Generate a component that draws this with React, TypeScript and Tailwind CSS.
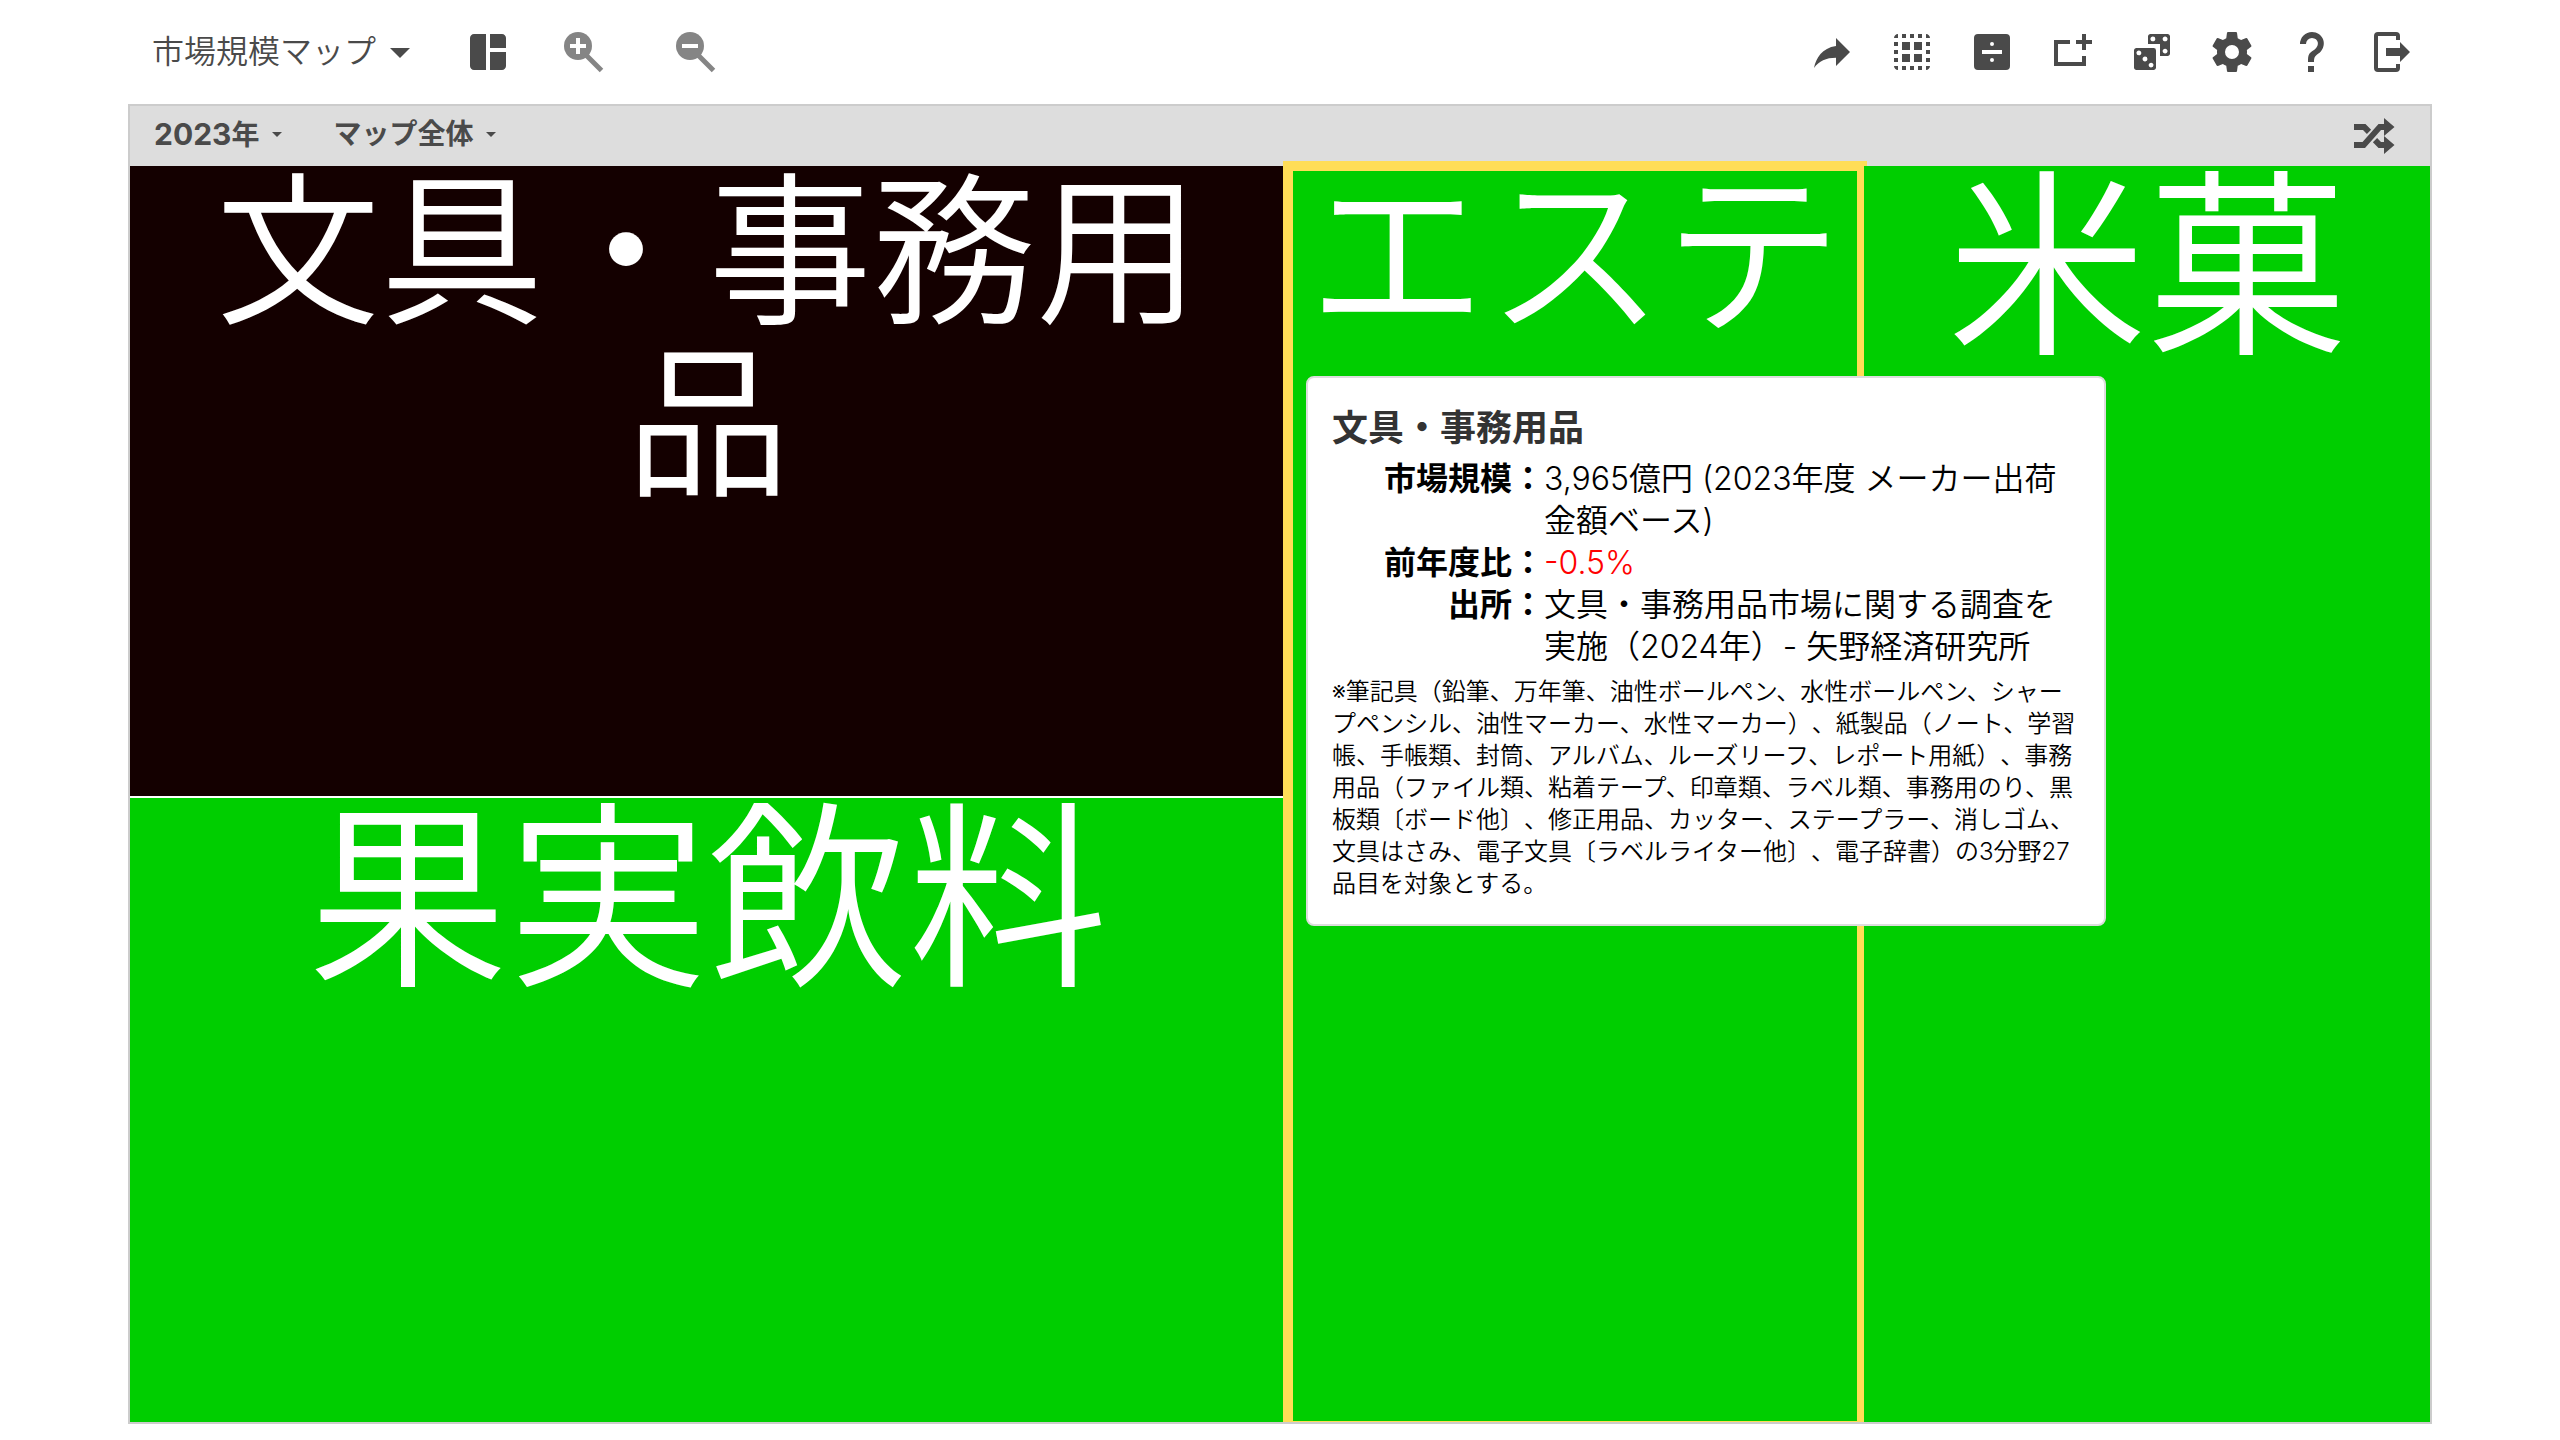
import type { ReactNode } from 'react'
import { MdSpaceDashboard } from 'react-icons/md'

const actions = [
  {
    label: '共有',
    path: 'M21,12L14,5V9C7,10 4,15 3,20C5.5,16.5 9,14.9 14,14.9V19L21,12Z',
  },
  {
    label: '選択',
    path: 'M3 5h2V3c-1.1 0-2 .9-2 2zm0 8h2v-2H3v2zm4 8h2v-2H7v2zM3 9h2V7H3v2zm10-6h-2v2h2V3zm6 0v2h2c0-1.1-.9-2-2-2zM5 21v-2H3c0 1.1.9 2 2 2zm-2-4h2v-2H3v2zM9 3H7v2h2V3zm2 18h2v-2h-2v2zm8-8h2v-2h-2v2zm0 8c1.1 0 2-.9 2-2h-2v2zm0-12h2V7h-2v2zm0 8h2v-2h-2v2zm-4 4h2v-2h-2v2zm0-16h2V3h-2v2zM7 7h4v4H7zM13 7h4v4h-4zM7 13h4v4H7zM13 13h4v4h-4z',
  },
  {
    label: '割り算',
    path: 'M5 3h14a2 2 0 0 1 2 2v14a2 2 0 0 1-2 2H5a2 2 0 0 1-2-2V5a2 2 0 0 1 2-2zM7 11v2h10v-2zM12 7a1 1 0 0 0 0 2a1 1 0 0 0 0-2zM12 15a1 1 0 0 0 0 2a1 1 0 0 0 0-2z',
  },
  {
    label: '追加',
    path: 'M19,6H22V8H19V11H17V8H14V6H17V3H19V6M17,17V14H19V19H3V6H11V8H5V17H17Z',
  },
  {
    label: 'ランダム',
    path: 'M19.78,3H11.22C10.55,3 10,3.55 10,4.22V8H16V14H19.78C20.45,14 21,13.45 21,12.78V4.22C21,3.55 20.45,3 19.78,3M12.44,6.67C11.76,6.67 11.21,6.12 11.21,5.44C11.21,4.76 11.76,4.21 12.44,4.21A1.23,1.23 0 0,1 13.67,5.44C13.67,6.12 13.12,6.67 12.44,6.67M18.56,12.78C17.88,12.79 17.33,12.24 17.32,11.56C17.31,10.88 17.86,10.33 18.54,10.32C19.22,10.31 19.77,10.86 19.78,11.56C19.77,12.24 19.23,12.79 18.56,12.78M18.56,6.67C17.88,6.68 17.33,6.13 17.32,5.45C17.31,4.77 17.86,4.22 18.54,4.21C19.22,4.2 19.77,4.75 19.78,5.44C19.78,6.12 19.24,6.66 18.56,6.67M4.22,10H12.78A1.22,1.22 0 0,1 14,11.22V19.78C14,20.45 13.45,21 12.78,21H4.22C3.55,21 3,20.45 3,19.78V11.22C3,10.55 3.55,10 4.22,10M8.5,14.28C7.83,14.28 7.28,14.83 7.28,15.5C7.28,16.17 7.83,16.72 8.5,16.72C9.17,16.72 9.72,16.17 9.72,15.5A1.22,1.22 0 0,0 8.5,14.28M5.44,11.22C4.77,11.22 4.22,11.77 4.22,12.44A1.22,1.22 0 0,0 5.44,13.66C6.11,13.66 6.66,13.11 6.66,12.44V12.44C6.66,11.77 6.11,11.22 5.44,11.22M11.55,17.33C10.88,17.33 10.33,17.88 10.33,18.55C10.33,19.22 10.88,19.77 11.55,19.77A1.22,1.22 0 0,0 12.77,18.55H12.77C12.77,17.88 12.23,17.34 11.56,17.33H11.55Z',
  },
  {
    label: '設定',
    path: 'M12,15.5A3.5,3.5 0 0,1 8.5,12A3.5,3.5 0 0,1 12,8.5A3.5,3.5 0 0,1 15.5,12A3.5,3.5 0 0,1 12,15.5M19.43,12.97C19.47,12.65 19.5,12.33 19.5,12C19.5,11.67 19.47,11.34 19.43,11L21.54,9.37C21.73,9.22 21.78,8.95 21.66,8.73L19.66,5.27C19.54,5.05 19.27,4.96 19.05,5.05L16.56,6.05C16.04,5.66 15.5,5.32 14.87,5.07L14.5,2.42C14.46,2.18 14.25,2 14,2H10C9.75,2 9.54,2.18 9.5,2.42L9.13,5.07C8.5,5.32 7.96,5.66 7.44,6.05L4.95,5.05C4.73,4.96 4.46,5.05 4.34,5.27L2.34,8.73C2.21,8.95 2.27,9.22 2.46,9.37L4.57,11C4.53,11.34 4.5,11.67 4.5,12C4.5,12.33 4.53,12.65 4.57,12.97L2.46,14.63C2.27,14.78 2.21,15.05 2.34,15.27L4.34,18.73C4.46,18.95 4.73,19.03 4.95,18.95L7.44,17.94C7.96,18.34 8.5,18.68 9.13,18.93L9.5,21.58C9.54,21.82 9.75,22 10,22H14C14.25,22 14.46,21.82 14.5,21.58L14.87,18.93C15.5,18.67 16.04,18.34 16.56,17.94L19.05,18.95C19.27,19.03 19.54,18.95 19.66,18.73L21.66,15.27C21.78,15.05 21.73,14.78 21.54,14.63L19.43,12.97Z',
  },
  {
    label: 'ヘルプ',
    path: 'M10,19H13V22H10V19M12,2C17.35,2.22 19.68,7.62 16.5,11.67C15.67,12.67 14.33,13.33 13.67,14.17C13,15 13,16 13,17H10C10,15.33 10,13.92 10.67,12.92C11.33,11.92 12.67,11.33 13.5,10.67C15.92,8.43 15.32,5.26 12,5A3,3 0 0,0 9,8H6A6,6 0 0,1 12,2Z',
  },
  {
    label: 'ログアウト',
    path: 'M14 2A2 2 0 0 1 16 4V6H14V4H5V20H14V18H16V20A2 2 0 0 1 14 22H5A2 2 0 0 1 3 20V4A2 2 0 0 1 5 2ZM9 10H16V7L21 12L16 17V14H9Z',
  },
]

const SHUFFLE =
  'M17,3L22.25,7.5L17,12L22.25,16.5L17,21V18H14.26L11.44,15.18L13.56,13.06L15.5,15H17V12L17,9H15.5L7.5,18H2V15H6.26L14.26,6H17V3M2,6H7.74L10.56,8.82L8.44,10.94L6.5,9H2V6Z'

const details = [
  { term: '市場規模', value: '3,965億円 (2023年度 メーカー出荷金額ベース)' },
  { term: '前年度比', value: '-0.5%', negative: true },
  { term: '出所', value: '文具・事務用品市場に関する調査を実施（2024年）- 矢野経済研究所' },
]

function Icon({ path, className = 'size-12' }: { path: string; className?: string }) {
  return (
    <svg viewBox="0 0 24 24" fill="currentColor" fillRule="evenodd" className={className} aria-hidden="true">
      <path d={path} />
    </svg>
  )
}

function ZoomIcon({ plus = false }: { plus?: boolean }) {
  return (
    <svg viewBox="0 0 48 48" className="size-12" aria-hidden="true">
      <circle cx="18" cy="18" r="14" fill="currentColor" />
      <path d="M26 27L41.5 42.5" stroke="currentColor" strokeWidth="5" />
      <path d={plus ? 'M10 18H26M18 10V26' : 'M10 18H26'} stroke="#fff" strokeWidth="4" />
    </svg>
  )
}

function Caret({ className }: { className: string }) {
  return <Icon path="M7,10L12,15L17,10H7Z" className={className} />
}

function Cell({ name, className, children }: { name: string; className: string; children?: ReactNode }) {
  return (
    <section className={`relative min-w-0 px-4 text-center font-[350] text-white ${className}`}>
      <h2>{name}</h2>
      {children}
    </section>
  )
}

function Tooltip() {
  return (
    <div
      role="tooltip"
      className="absolute top-[210px] left-[18px] z-20 w-[800px] rounded-lg border-2 border-[#ddd] bg-white p-6 text-left font-[350] text-black"
    >
      <h3 className="text-4xl leading-[52px] font-bold text-[#333]">文具・事務用品</h3>
      <dl className="mt-1 grid grid-cols-[212px_1fr] text-[32px] leading-[42px]">
        {details.map((d) => (
          <div key={d.term} className="contents">
            <dt className="text-right font-bold">{d.term}：</dt>
            <dd className={d.negative ? 'text-[#f00]' : ''}>{d.value}</dd>
          </div>
        ))}
      </dl>
      <p className="mt-2 text-2xl leading-8">
        ※筆記具（鉛筆、万年筆、油性ボールペン、水性ボールペン、シャープペンシル、油性マーカー、水性マーカー）、紙製品（ノート、学習帳、手帳類、封筒、アルバム、ルーズリーフ、レポート用紙）、事務用品（ファイル類、粘着テープ、印章類、ラベル類、事務用のり、黒板類〔ボード他〕、修正用品、カッター、ステープラー、消しゴム、文具はさみ、電子文具〔ラベルライター他〕、電子辞書）の3分野27品目を対象とする。
      </p>
    </div>
  )
}

export default function App() {
  return (
    <div
      lang="ja"
      className="flex h-screen flex-col bg-white px-[5%] pb-4 font-['Inter','Noto_Sans_CJK_JP',sans-serif] text-[#4a4a4a] [text-spacing-trim:space-all]"
    >
      <header className="flex h-[104px] shrink-0 items-center justify-between pr-4 pl-6">
        <div className="flex items-center">
          <button type="button" className="flex items-center text-[32px] leading-[48px] font-[350]">
            市場規模マップ
            <Caret className="size-12" />
          </button>
          <button type="button" aria-label="レイアウト" className="ml-10">
            <MdSpaceDashboard className="size-12" />
          </button>
          <div className="ml-12 flex gap-16 text-[#858585]">
            <button type="button" aria-label="拡大">
              <ZoomIcon plus />
            </button>
            <button type="button" aria-label="縮小">
              <ZoomIcon />
            </button>
          </div>
        </div>
        <nav className="flex gap-8">
          {actions.map((a) => (
            <button key={a.label} type="button" aria-label={a.label}>
              <Icon path={a.path} />
            </button>
          ))}
        </nav>
      </header>

      <main className="flex min-h-0 flex-1 flex-col border-2 border-[#ccc]">
        <div className="flex h-[60px] shrink-0 items-center justify-between bg-[#ddd] pr-8 pl-6">
          <div className="flex gap-11 pb-1 text-[28px] leading-8 font-bold">
            <button type="button" className="flex items-center gap-1.5">
              <span>
                <span className="text-[30px]">2023</span>年
              </span>
              <Caret className="size-6" />
            </button>
            <button type="button" className="flex items-center gap-1.5">
              マップ全体
              <Caret className="size-6" />
            </button>
          </div>
          <button type="button" aria-label="シャッフル">
            <Icon path={SHUFFLE} />
          </button>
        </div>

        {/* Treemap */}
        <div className="grid min-h-0 flex-1 grid-cols-[1156fr_574fr_566fr] gap-0.5">
          <div className="grid min-h-0 grid-rows-[630fr_624fr] gap-0.5">
            <Cell name="文具・事務用品" className="bg-[#140000] text-[164px] leading-[172px]" />
            <Cell name="果実飲料" className="bg-[#00ce00] text-[200px] leading-[200px]" />
          </div>
          {/* Later cells paint over the highlight; the tooltip has to sit above all of them */}
          <div className="relative grid min-w-0">
            <Cell name="エステ" className="z-10 bg-[#00ce00] text-[178px] leading-[180px]">
              <div className="pointer-events-none absolute -inset-x-[5px] -top-[5px] bottom-0 border-10 border-b border-[#ffdd57]" />
            </Cell>
            <Tooltip />
          </div>
          <Cell name="米菓" className="z-10 bg-[#00ce00] text-[200px] leading-[200px]" />
        </div>
      </main>
    </div>
  )
}
